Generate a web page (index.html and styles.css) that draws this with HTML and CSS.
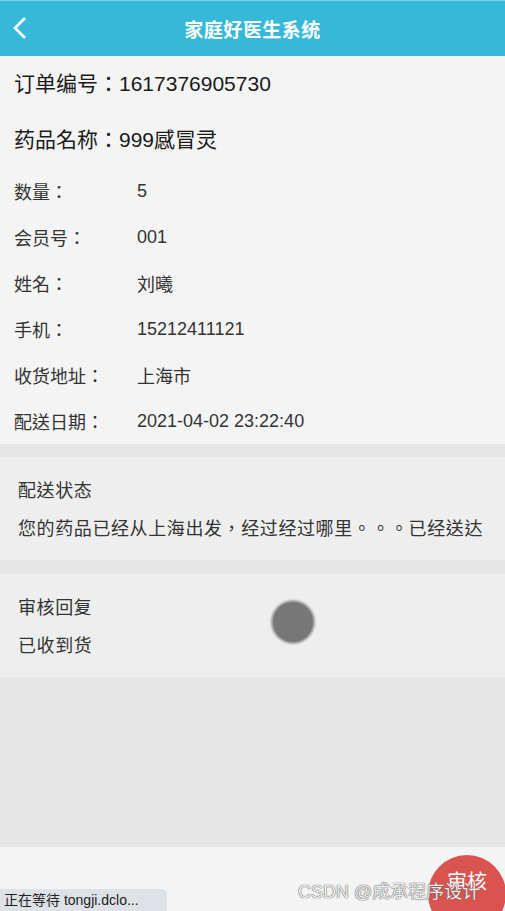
FILE: index.html
```html
<!DOCTYPE html>
<html>
<head>
    <meta charset="UTF-8">
    <meta name="viewport" content="width=device-width, initial-scale=1.0">
    <title>订单详情</title>
    <link rel="stylesheet" href="styles.css">
</head>
<body>
    <div class="page">
        <header class="topbar">
            <a class="back" href="#">
                <svg width="16" height="24" viewBox="0 0 16 24"><path d="M13 2 L3 12 L13 22" fill="none" stroke="#fff" stroke-width="2.6"/></svg>
            </a>
            <h1>家庭好医生系统</h1>
        </header>

        <div class="detail">
            <div class="big-row">订单编号：1617376905730</div>
            <div class="big-row">药品名称：999感冒灵</div>
            <div class="row"><span class="label">数量：</span><span>5</span></div>
            <div class="row"><span class="label">会员号：</span><span>001</span></div>
            <div class="row"><span class="label">姓名：</span><span>刘曦</span></div>
            <div class="row"><span class="label">手机：</span><span>15212411121</span></div>
            <div class="row"><span class="label">收货地址：</span><span>上海市</span></div>
            <div class="row"><span class="label">配送日期：</span><span>2021-04-02 23:22:40</span></div>
        </div>

        <div class="section">
            <div class="line">配送状态</div>
            <div class="line">您的药品已经从上海出发，经过经过哪里。。。已经送达</div>
        </div>

        <div class="section">
            <div class="line">审核回复</div>
            <div class="line">已收到货</div>
            <div class="dot"></div>
        </div>

        <div class="filler"></div>

        <footer class="bottombar">
            <button class="audit">审核</button>
            <span class="watermark">CSDN @成承程序设计</span>
            <div class="status">正在等待 tongji.dclo...</div>
        </footer>
    </div>
</body>
</html>
```

FILE: styles.css
```css
* {
    box-sizing: border-box;
}
body {
    margin: 0;
    font-family: "Liberation Sans", "Noto Sans CJK TC", sans-serif;
    color: #222;
    background: #e6e6e6;
}
.page {
    width: 505px;
    height: 911px;
    display: flex;
    flex-direction: column;
    overflow: hidden;
}
.topbar {
    height: 56px;
    flex: none;
    background: #36b8d8;
    border-top: 1px solid #7fd0e6;
    display: flex;
    align-items: center;
    justify-content: center;
    position: relative;
}
.topbar h1 {
    margin: 0;
    font-size: 19px;
    font-weight: bold;
    color: #fff;
    letter-spacing: 0.5px;
}
.back {
    position: absolute;
    left: 12px;
    top: 15px;
    display: flex;
}
.detail {
    background: #f4f4f4;
    padding-left: 14px;
    margin-bottom: 13px;
}
.big-row {
    height: 56px;
    line-height: 56px;
    font-size: 21px;
    color: #1a1a1a;
}
.row {
    height: 46px;
    display: flex;
    align-items: center;
    font-size: 18px;
    color: #333;
}
.label {
    width: 123px;
}
.section {
    background: #eeeeee;
    padding: 15px 18px 12px;
    margin-bottom: 14px;
    position: relative;
}
.section .line {
    height: 38px;
    line-height: 38px;
    font-size: 18px;
    letter-spacing: 0.6px;
    color: #333;
    white-space: nowrap;
}
.dot {
    position: absolute;
    left: 273px;
    top: 28px;
    width: 40px;
    height: 40px;
    border-radius: 50%;
    background: #777;
    box-shadow: 0 0 2px 2px #9a9a9a;
}
.filler {
    flex: 1;
    background: #e6e6e6;
}
.bottombar {
    height: 64px;
    flex: none;
    background: #f4f4f4;
    position: relative;
}
.audit {
    position: absolute;
    left: 428px;
    top: 8px;
    width: 78px;
    height: 78px;
    border: none;
    border-radius: 50%;
    background: #d9534f;
    color: #fff;
    font-family: inherit;
    font-size: 20px;
    padding: 0 0 28px;
}
.watermark {
    position: absolute;
    left: 298px;
    top: 30px;
    font-size: 18px;
    color: #eee;
    text-shadow: 0 0 1px #555, 0 0 1px #555;
}
.status {
    position: absolute;
    left: 0;
    bottom: 0;
    width: 167px;
    height: 22px;
    line-height: 22px;
    padding-left: 4px;
    font-size: 14px;
    color: #222;
    background: #dee1e6;
    border-top-right-radius: 5px;
    white-space: nowrap;
}
```
